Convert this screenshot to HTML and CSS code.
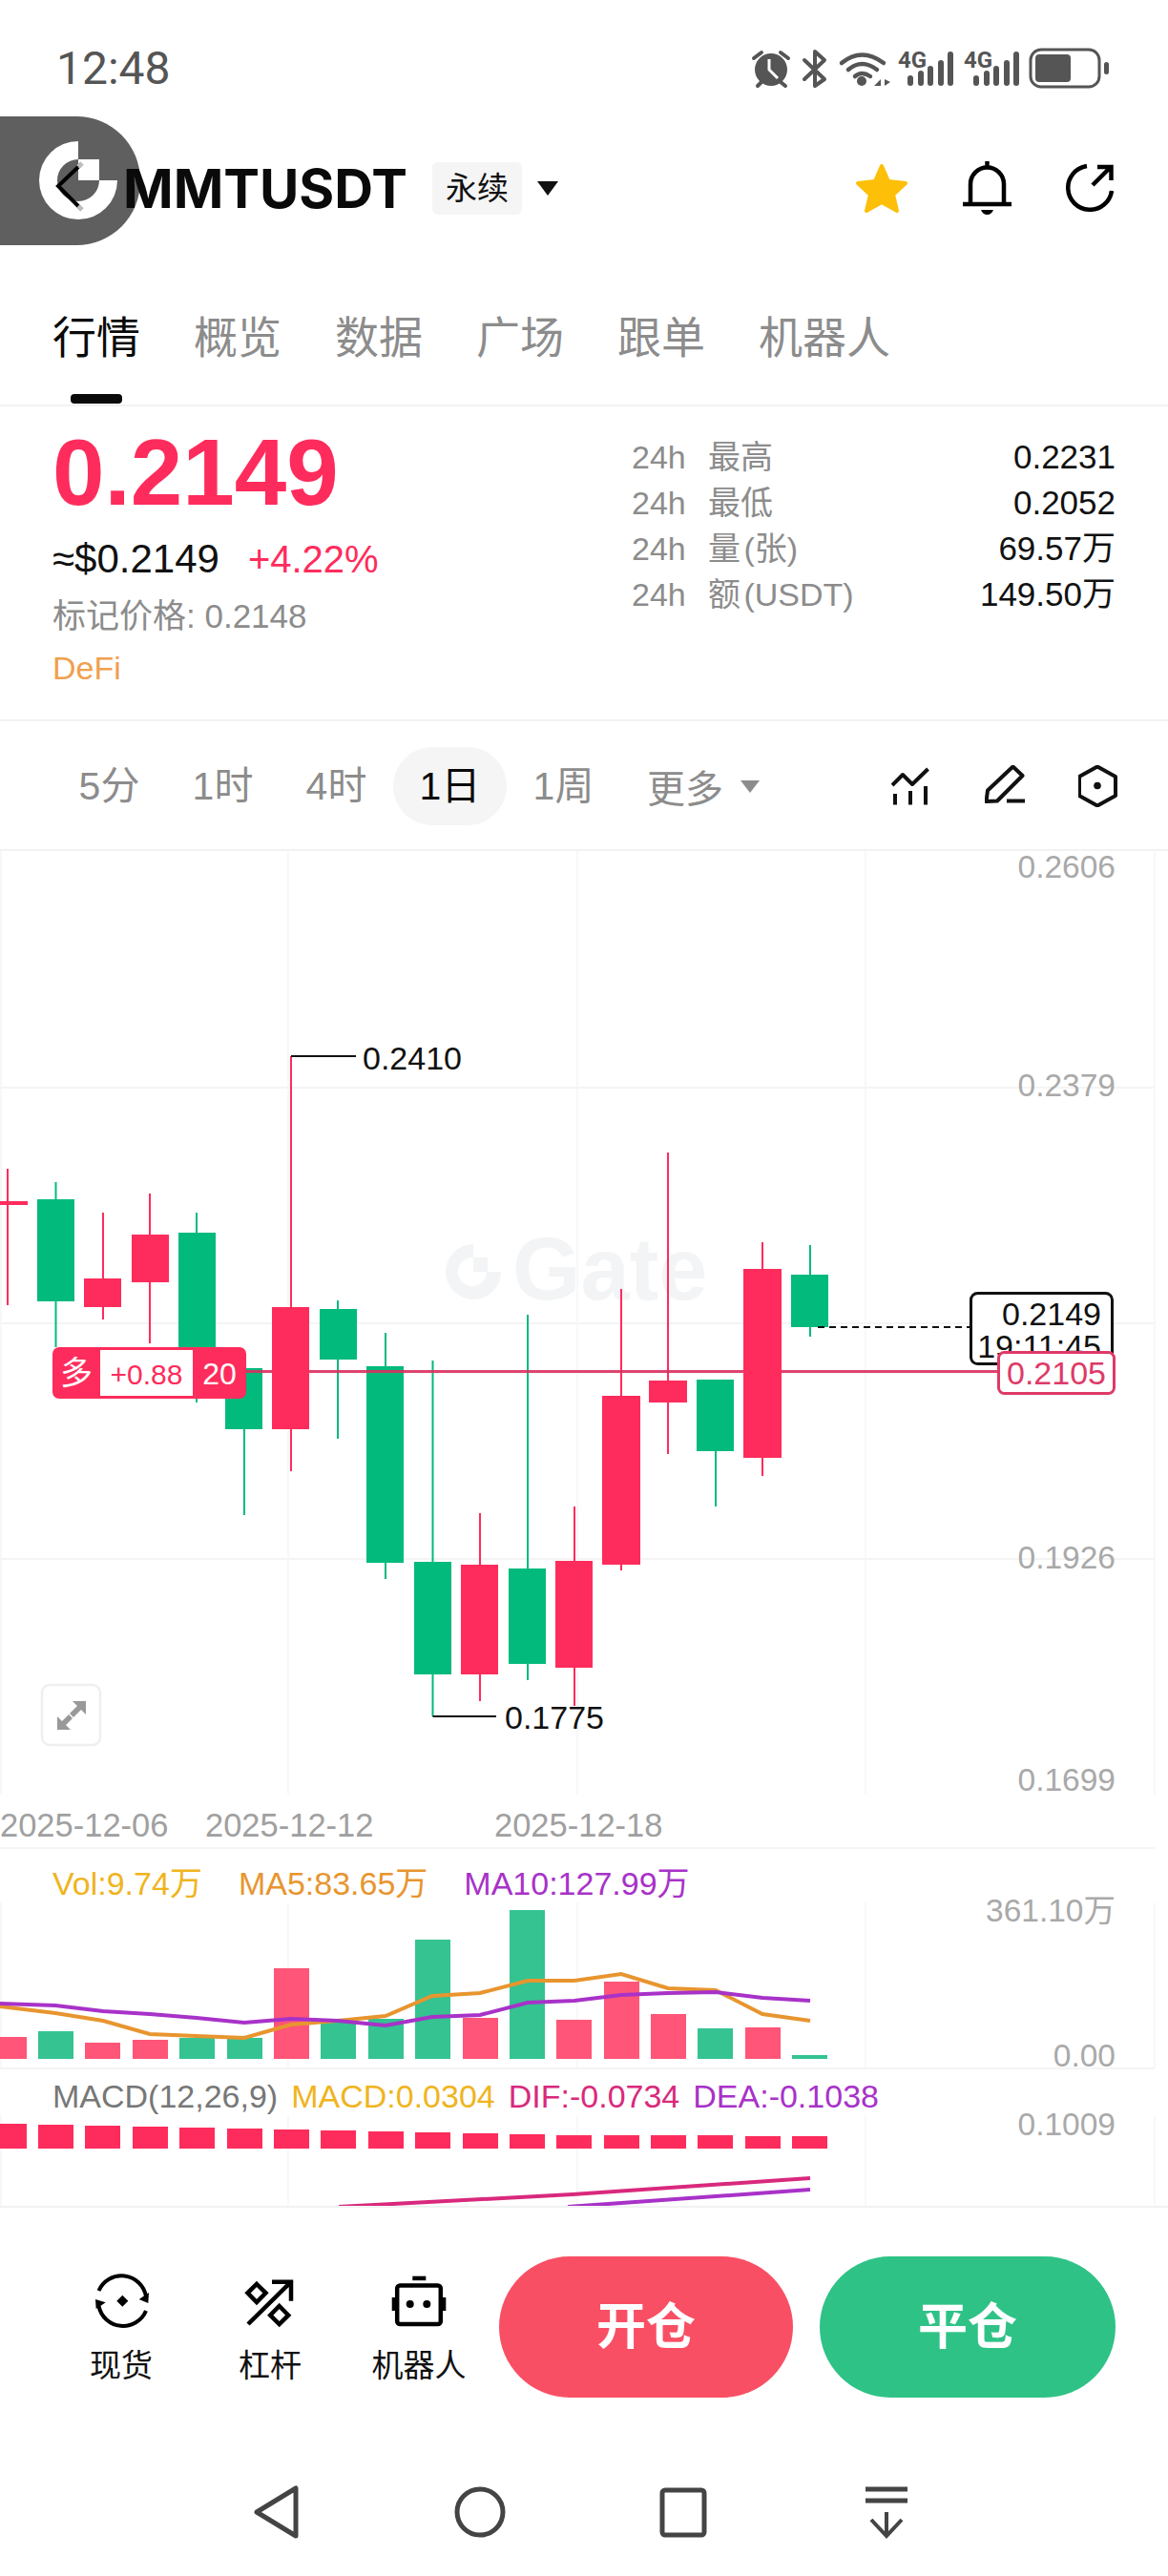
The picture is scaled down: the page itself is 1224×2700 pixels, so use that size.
FILE: index.html
```html
<!doctype html>
<html lang="en">
  <head>
    <meta charset="UTF-8" />
    <meta name="viewport" content="width=device-width, initial-scale=1.0" />
    <title>MMTUSDT</title>
    <link rel="stylesheet" href="styles.css">
  </head>
  <body>
    <div class="page">
      <!-- Status bar -->
      <div class="status">
        <span class="clock">12:48</span>
        <svg class="status-icons" width="400" height="50" viewBox="0 0 400 50">
          <circle cx="23" cy="27" r="17" class="s-fill" />
          <path d="M21 16 V27 L30 36" class="s-hand" />
          <path d="M5 15 L13 9 M33 9 L41 15 M9 44 L13 40 M33 40 L38 44" class="s-line" />
          <path d="M58 17 L79 37 L69 44 V8 L79 17 L58 37" class="s-line" />
          <path d="M97 20 Q118 3 141 20 M104 27 Q118 15 134 27 M111 34 Q118 28 127 34" class="s-wifi" />
          <circle cx="118" cy="39" r="5" class="s-fill" />
          <path d="M138 37 V44 H131 Z M142 37 L148 40 L142 44 Z" class="s-fill" />
          <text x="156" y="25" class="s-4g">4G</text>
          <rect x="166" y="33" width="6" height="11" rx="3" class="s-fill" />
          <rect x="177" y="28" width="6" height="16" rx="3" class="s-fill" />
          <rect x="187" y="23" width="6" height="21" rx="3" class="s-fill" />
          <rect x="198" y="17" width="6" height="27" rx="3" class="s-fill" />
          <rect x="208" y="8" width="6" height="36" rx="3" class="s-fill" />
          <text x="225" y="25" class="s-4g">4G</text>
          <rect x="235" y="33" width="6" height="11" rx="3" class="s-fill" />
          <rect x="246" y="28" width="6" height="16" rx="3" class="s-fill" />
          <rect x="256" y="23" width="6" height="21" rx="3" class="s-fill" />
          <rect x="267" y="17" width="6" height="27" rx="3" class="s-fill" />
          <rect x="277" y="8" width="6" height="36" rx="3" class="s-fill" />
          <rect x="295" y="6" width="72" height="39" rx="11" class="s-batt" />
          <rect x="300" y="11" width="37" height="29" rx="4" class="s-fill" />
          <rect x="372" y="19" width="5" height="13" rx="2.5" class="s-fill" />
        </svg>
      </div>

      <!-- Floating logo over the back arrow -->
      <div class="float-logo">
        <svg width="147" height="135" viewBox="0 0 147 135">
          <path d="M82 26 A41 41 0 1 0 123 67 H104 A22 22 0 1 1 82 45 Z" fill="#fff" />
          <rect x="82" y="45" width="22" height="22" fill="#fff" />
          <path d="M86 49 L82 53 M82 94 L86 98" class="logo-back-light" />
          <path d="M82 53 L61 73 L82 94" class="logo-back" />
        </svg>
      </div>

      <!-- Header -->
      <div class="header">
        <span class="symbol">MMTUSDT</span>
        <span class="tag">永续</span>
        <span class="tag-arrow"></span>
        <div class="header-icons">
          <svg width="56" height="53" viewBox="0 0 56 53">
            <path d="M28 3 L35 19 L53 21 L40 33 L44 50 L28 41 L12 50 L16 33 L3 21 L21 19 Z" class="star" />
          </svg>
          <svg width="51" height="56" viewBox="0 0 51 56">
            <path d="M8 44 V24 A17.5 17.5 0 0 1 43 24 V44" class="ico" />
            <path d="M0 45 H51" class="ico" />
            <path d="M25.5 0 V5" class="ico" />
            <path d="M19 51 H32 Q30 56 25.5 56 Q21 56 19 51 Z" fill="#000" />
          </svg>
          <svg width="50" height="50" viewBox="0 0 50 50">
            <path d="M22 2 A23 23 0 1 0 48 28" class="ico" />
            <path d="M28 22 L47 3 M33 3 H47.5 V17" class="ico" />
          </svg>
        </div>
      </div>

      <!-- Tabs -->
      <div class="tabs">
        <div class="tab tab-active">行情<span class="tab-bar"></span></div>
        <div class="tab">概览</div>
        <div class="tab">数据</div>
        <div class="tab">广场</div>
        <div class="tab">跟单</div>
        <div class="tab">机器人</div>
      </div>

      <!-- Price summary -->
      <div class="info">
        <div class="info-left">
          <div class="price">0.2149</div>
          <div class="price-row">
            <span class="fiat">≈$0.2149</span>
            <span class="change">+4.22%</span>
          </div>
          <div class="mark">标记价格: 0.2148</div>
          <div class="sector">DeFi</div>
        </div>
        <div class="info-right">
          <div class="stat"><span class="stat-h">24h</span><span>最高</span><span class="stat-val">0.2231</span></div>
          <div class="stat"><span class="stat-h">24h</span><span>最低</span><span class="stat-val">0.2052</span></div>
          <div class="stat"><span class="stat-h">24h</span><span>量 (张)</span><span class="stat-val">69.57万</span></div>
          <div class="stat"><span class="stat-h">24h</span><span>额 (USDT)</span><span class="stat-val">149.50万</span></div>
        </div>
      </div>

      <!-- Interval toolbar -->
      <div class="toolbar">
        <div class="interval">5分</div>
        <div class="interval">1时</div>
        <div class="interval">4时</div>
        <div class="interval interval-active">1日</div>
        <div class="interval">1周</div>
        <div class="more">更多<span class="more-arrow"></span></div>
        <div class="tool-icons">
          <svg width="42" height="40" viewBox="0 0 42 40">
            <path d="M1 19 L12 8 L22 18 L38.5 2" class="tool" />
            <path d="M4 28 V39.5 M20 25 V39.5 M36 20 V39.5" class="tool" />
          </svg>
          <svg width="42" height="44" viewBox="0 0 42 44">
            <path d="M1.5 38 L3 26.5 L29.5 1.5 L39.5 11 L13 37.5 Z" class="tool" />
            <path d="M23 37.5 H42" class="tool" />
          </svg>
          <svg width="41" height="44" viewBox="0 0 41 44">
            <path d="M20 1.5 L39 12 V32 L20 42.5 L1 32 V12 Z" class="tool" />
            <circle cx="20" cy="21.5" r="3.8" fill="#111" />
          </svg>
        </div>
      </div>

      <!-- Main candlestick chart -->
      <svg class="chart chart-main" width="1224" height="989" viewBox="0 892 1224 989">
        <path d="M0 1140 H1210 M0 1387 H1210 M0 1634 H1210" class="grid" />
        <path d="M1 892 V1881 M302 892 V1881 M605 892 V1881 M907 892 V1881 M1210 892 V1881" class="grid-v" />

        <path d="M496 1304 A29 29 0 1 0 525 1333 H510 A15 15 0 1 1 496 1318 Z" class="wm-logo" />
        <rect x="496" y="1318" width="15" height="15" class="wm-logo" />
        <text x="537" y="1362" class="watermark">Gate</text>

        <path d="M8 1225 V1368" class="wick-down" /><rect x="0" y="1259" width="29" height="4" class="down" />
        <path d="M58.5 1239 V1412" class="wick-up" /><rect x="39" y="1257" width="39" height="107" class="up" />
        <path d="M108 1271 V1383" class="wick-down" /><rect x="88" y="1340" width="39" height="30" class="down" />
        <path d="M157 1251 V1408" class="wick-down" /><rect x="138" y="1294" width="39" height="50" class="down" />
        <path d="M206 1271 V1470" class="wick-up" /><rect x="187" y="1292" width="39" height="130" class="up" />
        <path d="M256 1434 V1588" class="wick-up" /><rect x="236" y="1434" width="39" height="64" class="up" />
        <path d="M305 1107 V1542" class="wick-down" /><rect x="285" y="1370" width="39" height="128" class="down" />
        <path d="M354 1363 V1508" class="wick-up" /><rect x="335" y="1372" width="39" height="53" class="up" />
        <path d="M404 1397 V1655" class="wick-up" /><rect x="384" y="1432" width="39" height="206" class="up" />
        <path d="M453.5 1426 V1799" class="wick-up" /><rect x="434" y="1637" width="39" height="118" class="up" />
        <path d="M503 1586 V1783" class="wick-down" /><rect x="483" y="1640" width="39" height="115" class="down" />
        <path d="M553 1378 V1761" class="wick-up" /><rect x="533" y="1644" width="39" height="100" class="up" />
        <path d="M602 1579 V1788" class="wick-down" /><rect x="582" y="1636" width="39" height="112" class="down" />
        <path d="M651 1351 V1646" class="wick-down" /><rect x="631" y="1463" width="40" height="177" class="down" />
        <path d="M700 1208 V1524" class="wick-down" /><rect x="680" y="1447" width="40" height="23" class="down" />
        <path d="M750 1446 V1579" class="wick-up" /><rect x="730" y="1446" width="39" height="75" class="up" />
        <path d="M799 1302 V1547" class="wick-down" /><rect x="779" y="1330" width="40" height="198" class="down" />
        <path d="M849 1305 V1401" class="wick-up" /><rect x="829" y="1336" width="39" height="55" class="up" />

        <path d="M258 1437.5 H285 M324 1437.5 H779 M819 1437.5 H1045" class="position-line" />
        <path d="M857 1391 H1016" class="dash" />

        <path d="M305 1107 H373" class="leader" />
        <text x="380" y="1121" class="label-black">0.2410</text>
        <path d="M453.5 1799 H520" class="leader" />
        <text x="529" y="1812" class="label-black">0.1775</text>

        <text x="1169" y="920" class="axis">0.2606</text>
        <text x="1169" y="1149" class="axis">0.2379</text>
        <text x="1169" y="1644" class="axis">0.1926</text>
        <text x="1169" y="1877" class="axis">0.1699</text>

        <!-- position badge -->
        <rect x="55" y="1412" width="203" height="54" rx="7" class="down" />
        <rect x="105" y="1415" width="97" height="48" fill="#fff" />
        <text x="80" y="1451" class="badge-cjk">多</text>
        <text x="153.5" y="1451" class="badge-mid">+0.88</text>
        <text x="230" y="1451" class="badge-end">20</text>

        <!-- last price and position price tags -->
        <rect x="1017.5" y="1355.5" width="148" height="74" rx="7" class="last-box" />
        <text x="1154" y="1389" class="label-end">0.2149</text>
        <text x="1154" y="1423" class="label-end">19:11:45</text>
        <rect x="1046.5" y="1417.5" width="121" height="43" rx="6" class="pos-box" />
        <text x="1159" y="1451" class="pos-text">0.2105</text>

        <!-- fullscreen button -->
        <rect x="44" y="1766" width="61" height="63" rx="8" class="expand-box" />
        <path d="M90 1783 V1797 L85 1792 L77 1800 L73 1796 L81 1788 L76 1783 Z" class="expand" />
        <path d="M60 1813 V1799 L65 1804 L72 1797 L76 1801 L69 1808 L74 1813 Z" class="expand" />
      </svg>

      <div class="dates">
        <span>2025-12-06</span>
        <span>2025-12-12</span>
        <span>2025-12-18</span>
      </div>

      <!-- Volume -->
      <div class="legend legend-vol">
        <span class="c-vol">Vol:9.74万</span>
        <span class="c-ma5">MA5:83.65万</span>
        <span class="c-ma10">MA10:127.99万</span>
      </div>
      <svg class="chart" width="1224" height="176" viewBox="0 1994 1224 176">
        <path d="M0 2168 H1210" class="grid" />
        <path d="M1 1994 V2168 M302 1994 V2168 M605 1994 V2168 M907 1994 V2168 M1210 1994 V2168" class="grid-v" />
        <rect x="0" y="2135" width="28" height="23" class="vol-down" />
        <rect x="40" y="2129" width="37" height="29" class="vol-up" />
        <rect x="89" y="2141" width="37" height="17" class="vol-down" />
        <rect x="139" y="2138" width="37" height="20" class="vol-down" />
        <rect x="188" y="2136" width="37" height="22" class="vol-up" />
        <rect x="238" y="2136" width="37" height="22" class="vol-up" />
        <rect x="287" y="2063" width="37" height="95" class="vol-down" />
        <rect x="336" y="2117" width="37" height="41" class="vol-up" />
        <rect x="386" y="2116" width="37" height="42" class="vol-up" />
        <rect x="435" y="2033" width="37" height="125" class="vol-up" />
        <rect x="485" y="2115" width="37" height="43" class="vol-down" />
        <rect x="534" y="2002" width="37" height="156" class="vol-up" />
        <rect x="583" y="2117" width="37" height="41" class="vol-down" />
        <rect x="633" y="2077" width="37" height="81" class="vol-down" />
        <rect x="682" y="2111" width="37" height="47" class="vol-down" />
        <rect x="731" y="2126" width="37" height="32" class="vol-up" />
        <rect x="781" y="2125" width="37" height="33" class="vol-down" />
        <rect x="830" y="2154" width="37" height="4" class="vol-up" />
        <polyline points="0,2103 58,2110 108,2118 157,2132 206,2134 256,2136 305,2122 354,2118 404,2113 453,2092 503,2089 553,2076 602,2076 651,2069 700,2084 750,2086 799,2111 849,2118" class="ma5" />
        <polyline points="0,2100 58,2102 108,2108 157,2111 206,2115 256,2120 305,2116 354,2118 404,2123 453,2114 503,2112 553,2099 602,2097 651,2091 700,2089 750,2088 799,2094 849,2097" class="ma10" />
        <text x="1169" y="2014" class="axis">361.10万</text>
        <text x="1169" y="2166" class="axis">0.00</text>
      </svg>

      <!-- MACD -->
      <div class="legend legend-macd">
        <span class="c-macd-name">MACD(12,26,9)</span>
        <span class="c-vol">MACD:0.0304</span>
        <span class="c-dif">DIF:-0.0734</span>
        <span class="c-ma10">DEA:-0.1038</span>
      </div>
      <svg class="chart" width="1224" height="95" viewBox="0 2217 1224 95">
        <path d="M1 2217 V2312 M302 2217 V2312 M605 2217 V2312 M907 2217 V2312 M1210 2217 V2312" class="grid-v" />
        <rect x="0" y="2226" width="28" height="26" class="down" />
        <rect x="40" y="2227" width="37" height="25" class="down" />
        <rect x="89" y="2228" width="37" height="24" class="down" />
        <rect x="139" y="2229" width="37" height="23" class="down" />
        <rect x="188" y="2230" width="37" height="22" class="down" />
        <rect x="238" y="2231" width="37" height="21" class="down" />
        <rect x="287" y="2232" width="37" height="20" class="down" />
        <rect x="336" y="2233" width="37" height="19" class="down" />
        <rect x="386" y="2234" width="37" height="18" class="down" />
        <rect x="435" y="2235" width="37" height="17" class="down" />
        <rect x="485" y="2236" width="37" height="16" class="down" />
        <rect x="534" y="2237" width="37" height="15" class="down" />
        <rect x="583" y="2238" width="37" height="14" class="down" />
        <rect x="633" y="2238" width="37" height="14" class="down" />
        <rect x="682" y="2238" width="37" height="14" class="down" />
        <rect x="731" y="2238" width="37" height="14" class="down" />
        <rect x="781" y="2239" width="37" height="13" class="down" />
        <rect x="830" y="2239" width="37" height="13" class="down" />
        <path d="M355 2313 L600 2300 L849 2283" class="dif" />
        <path d="M595 2313 L849 2295" class="dea" />
        <text x="1169" y="2238" class="axis">0.1009</text>
      </svg>

      <!-- Bottom actions -->
      <div class="actions">
        <div class="action">
          <svg width="60" height="60" viewBox="0 0 60 60">
            <path d="M6.5 19 A26 26 0 0 1 56 25 M56 40 A26 26 0 0 1 6.5 35" class="ico-thin" />
            <path d="M48.7 28 L59 21 L58.3 32 Z M3 28 L13.7 31.3 L3.7 38 Z" fill="#000" />
            <path d="M31.3 23.7 L37.3 29.7 L31.3 35.7 L25.3 29.7 Z" fill="#000" />
          </svg>
          <span>现货</span>
        </div>
        <div class="action">
          <svg width="60" height="60" viewBox="0 0 60 60">
            <path d="M7 54 L51 10.7 M32 9.7 H52 V29.7" class="ico-bold" />
            <path d="M16 12 L25.5 21.3 L16 31 L6.5 21.3 Z M39.7 35 L49.2 44.7 L39.7 54 L30.2 44.7 Z" class="ico-bold" />
          </svg>
          <span>杠杆</span>
        </div>
        <div class="action">
          <svg width="60" height="60" viewBox="0 0 60 60">
            <rect x="23.3" y="3.7" width="14" height="4.5" fill="#000" />
            <rect x="7.2" y="13.5" width="45.6" height="40.6" rx="3" class="ico-bold" />
            <rect x="1.7" y="26" width="4" height="14" fill="#000" />
            <rect x="54.3" y="26" width="4" height="14" fill="#000" />
            <circle cx="20.7" cy="33" r="4" fill="#000" />
            <circle cx="38.3" cy="33" r="4" fill="#000" />
          </svg>
          <span>机器人</span>
        </div>
        <div class="trade-btn trade-open">开仓</div>
        <div class="trade-btn trade-close">平仓</div>
      </div>

      <!-- Android nav bar -->
      <div class="navbar">
        <svg width="60" height="60" viewBox="0 0 60 60">
          <path d="M50 5 V55 L9 30 Z" class="nav" />
        </svg>
        <svg width="60" height="60" viewBox="0 0 60 60">
          <circle cx="30" cy="30" r="24" class="nav" />
        </svg>
        <svg width="60" height="60" viewBox="0 0 60 60">
          <rect x="8" y="7" width="44" height="47" rx="3" class="nav" />
        </svg>
        <svg width="60" height="60" viewBox="0 0 60 60">
          <path d="M8 6 H52 M8 18 H52" class="nav" />
          <path d="M30 30 V55 M14 38 L30 55 L46 38" class="nav-thin" />
        </svg>
      </div>
    </div>
  </body>
</html>
```

FILE: styles.css
```css
* {
  box-sizing: border-box;
}

body {
  margin: 0;
  background: #fff;
  font-family: "Liberation Sans", "Noto Sans CJK SC", sans-serif;
  color: #111;
}

.page {
  position: relative;
  width: 1224px;
  height: 2700px;
  overflow: hidden;
  background: #fff;
}

/* status bar */
.status {
  display: flex;
  align-items: center;
  justify-content: space-between;
  height: 142px;
  padding: 0 39px 0 59px;
}

.clock {
  font-family: Roboto, sans-serif;
  font-size: 48px;
  color: #555;
}

.s-fill {
  fill: #555;
}

.s-line {
  fill: none;
  stroke: #555;
  stroke-width: 4;
  stroke-linecap: round;
  stroke-linejoin: round;
}

.s-wifi {
  fill: none;
  stroke: #555;
  stroke-width: 4.5;
  stroke-linecap: round;
}

.s-hand {
  fill: none;
  stroke: #fff;
  stroke-width: 3;
}

.s-4g {
  font-family: Roboto, sans-serif;
  font-size: 24px;
  font-weight: 700;
  fill: #555;
}

.s-batt {
  fill: none;
  stroke: #555;
  stroke-width: 3;
}

/* floating logo */
.float-logo {
  position: absolute;
  top: 122px;
  left: 0;
  width: 147px;
  height: 135px;
  background: #5f5f5f;
  border-radius: 0 67px 67px 0;
}

.float-logo svg {
  display: block;
}

.logo-back {
  fill: none;
  stroke: #000;
  stroke-width: 4;
}

.logo-back-light {
  fill: none;
  stroke: #bdbdbd;
  stroke-width: 5;
}

/* header */
.header {
  position: relative;
  display: flex;
  align-items: center;
  height: 110px;
  padding: 0 57px 0 129px;
}

.symbol {
  font-family: Inter, sans-serif;
  font-size: 56.5px;
  font-weight: 700;
  color: #0a0a0a;
}

.tag {
  margin-left: 26px;
  padding: 0 14px;
  height: 55px;
  line-height: 55px;
  font-size: 33px;
  background: #f5f5f5;
  border-radius: 6px;
}

.tag-arrow {
  margin-left: 16px;
  border-top: 15px solid #111;
  border-left: 11px solid transparent;
  border-right: 11px solid transparent;
}

.header-icons {
  display: flex;
  align-items: center;
  gap: 57px;
  margin-left: auto;
}

.header-icons svg {
  display: block;
}

.star {
  fill: #fdbf08;
  stroke: #fdbf08;
  stroke-width: 4;
  stroke-linejoin: round;
}

.ico {
  fill: none;
  stroke: #000;
  stroke-width: 4.5;
}

/* tabs */
.tabs {
  display: flex;
  gap: 56px;
  align-items: flex-start;
  height: 174px;
  padding: 74px 0 0 55px;
  border-bottom: 2px solid #f2f2f2;
}

.tab {
  font-size: 46px;
  line-height: 56px;
  color: #8c8c8c;
}

.tab-active {
  display: flex;
  flex-direction: column;
  align-items: center;
  color: #0a0a0a;
}

.tab-bar {
  width: 54px;
  height: 10px;
  margin-top: 31px;
  background: #0a0a0a;
  border-radius: 4px;
}

/* price summary */
.info {
  display: flex;
  justify-content: space-between;
  height: 330px;
  padding: 0 55px;
  border-bottom: 2px solid #f2f2f2;
}

.price {
  margin-top: 24px;
  font-size: 98px;
  line-height: 90px;
  font-weight: 700;
  color: #fe2c5c;
}

.price-row {
  display: flex;
  align-items: center;
  gap: 30px;
  height: 40px;
  margin-top: 26px;
}

.fiat {
  font-size: 42px;
  color: #111;
}

.change {
  font-size: 40px;
  color: #fe2c5c;
}

.mark {
  margin-top: 20px;
  font-size: 35px;
  line-height: 40px;
  color: #8c8c8c;
}

.sector {
  margin-top: 14px;
  font-size: 34px;
  line-height: 40px;
  color: #f0a050;
}

.info-right {
  width: 507px;
  padding-top: 29px;
}

.stat {
  display: flex;
  font-size: 34px;
  line-height: 48px;
  word-spacing: -6px;
  color: #8c8c8c;
}

.stat-h {
  width: 80px;
}

.stat-val {
  margin-left: auto;
  font-size: 35px;
  color: #111;
}

/* interval toolbar */
.toolbar {
  display: flex;
  align-items: center;
  height: 136px;
  padding: 2px 53px 0 55px;
  border-bottom: 2px solid #f2f2f2;
}

.interval {
  width: 119px;
  height: 82px;
  line-height: 82px;
  text-align: center;
  font-size: 41px;
  color: #8c8c8c;
  border-radius: 41px;
}

.interval-active {
  background: #f5f5f5;
  color: #0a0a0a;
}

.more {
  display: flex;
  align-items: center;
  margin-left: 28px;
  font-size: 40px;
  color: #8c8c8c;
}

.more-arrow {
  margin-left: 18px;
  border-top: 13px solid #8c8c8c;
  border-left: 10px solid transparent;
  border-right: 10px solid transparent;
}

.tool-icons {
  display: flex;
  align-items: center;
  gap: 56px;
  margin-left: auto;
}

.tool {
  fill: none;
  stroke: #111;
  stroke-width: 4;
  stroke-linejoin: round;
}

/* charts */
.chart {
  display: block;
  overflow: visible;
}

.grid {
  stroke: #f4f4f4;
  stroke-width: 2;
  fill: none;
}

.grid-v {
  stroke: #f6f6f6;
  stroke-width: 1.5;
  fill: none;
}

.up {
  fill: #02ba7c;
}

.down {
  fill: #fe2c5c;
}

.wick-up {
  stroke: #02ba7c;
  stroke-width: 2;
}

.wick-down {
  stroke: #fe2c5c;
  stroke-width: 2;
}

.vol-up {
  fill: #34c391;
}

.vol-down {
  fill: #fe5578;
}

.wm-logo {
  fill: #f3f4f6;
}

.position-line {
  fill: none;
  stroke: #d9305f;
  stroke-opacity: 0.9;
  stroke-width: 3;
}

.dash {
  stroke: #111;
  stroke-width: 2;
  stroke-dasharray: 7 5;
}

.leader {
  stroke: #111;
  stroke-width: 2;
}

.chart text {
  font-family: "Liberation Sans", "Noto Sans CJK SC", sans-serif;
  font-size: 34px;
}

.chart .watermark {
  font-size: 92px;
  font-weight: 700;
  fill: #f3f4f6;
}

.label-black {
  fill: #111;
}

.label-end {
  fill: #111;
  text-anchor: end;
}

.chart .axis {
  font-size: 33.5px;
  fill: #a9a9a9;
  text-anchor: end;
}

.badge-cjk {
  fill: #fff;
  text-anchor: middle;
}

.badge-mid {
  fill: #fe2c5c;
  text-anchor: middle;
}

.badge-end {
  fill: #fff;
  text-anchor: middle;
}

.chart .badge-mid {
  font-size: 30px;
}

.chart .badge-end {
  font-size: 32px;
}

.last-box {
  fill: #fff;
  stroke: #111;
  stroke-width: 3;
}

.pos-box {
  fill: #fff;
  stroke: #de3a68;
  stroke-width: 3;
}

.pos-text {
  fill: #de3a68;
  text-anchor: end;
}

.expand-box {
  fill: #fff;
  stroke: #efefef;
  stroke-width: 2.5;
}

.expand {
  fill: #999;
}

.dates {
  display: grid;
  grid-template-columns: 215px 303px 1fr;
  width: 1210px;
  height: 57px;
  padding-top: 12px;
  font-size: 34.5px;
  line-height: 40px;
  color: #a0a0a0;
  border-bottom: 2px solid #f4f4f4;
}

.legend {
  display: flex;
  font-size: 34px;
  line-height: 40px;
  padding-left: 55px;
}

.legend-vol {
  gap: 38px;
  height: 56px;
  padding-top: 16px;
}

.legend-macd {
  gap: 14px;
  height: 47px;
  padding-top: 7px;
}

.c-vol {
  color: #f0b41e;
}

.c-ma5 {
  color: #e8952f;
}

.c-ma10 {
  color: #a832c8;
}

.c-dif {
  color: #d9297c;
}

.c-macd-name {
  color: #777;
}

.ma5,
.ma10,
.dif,
.dea {
  fill: none;
  stroke-width: 4;
}

.ma5 {
  stroke: #e8952f;
}

.ma10 {
  stroke: #a832c8;
}

.dif {
  stroke: #d9297c;
}

.dea {
  stroke: #a832c8;
}

/* bottom actions */
.actions {
  position: relative;
  display: flex;
  height: 201px;
  padding: 51px 55px 0 49px;
  background: #fff;
  border-top: 2px solid #f2f2f2;
}

.action {
  display: flex;
  flex-direction: column;
  align-items: center;
  width: 156px;
  padding-top: 17px;
  font-size: 33px;
  line-height: 40px;
}

.action span {
  margin-top: 18px;
}

.action svg {
  display: block;
}

.ico-thin {
  fill: none;
  stroke: #000;
  stroke-width: 4;
}

.ico-bold {
  fill: none;
  stroke: #000;
  stroke-width: 4.5;
}

.trade-btn {
  height: 148px;
  line-height: 148px;
  text-align: center;
  font-size: 52px;
  font-weight: 700;
  color: #fff;
  border-radius: 74px;
}

.trade-open {
  width: 308px;
  margin-left: 6px;
  background: #f94f64;
}

.trade-close {
  width: 310px;
  margin-left: 28px;
  background: #2fc287;
}

/* nav bar */
.navbar {
  display: grid;
  grid-template-columns: repeat(4, 213px);
  justify-items: center;
  padding: 90px 0 0 183px;
}

.nav {
  fill: none;
  stroke: #444;
  stroke-width: 5;
  stroke-linejoin: round;
}

.nav-thin {
  fill: none;
  stroke: #444;
  stroke-width: 4;
}
```
